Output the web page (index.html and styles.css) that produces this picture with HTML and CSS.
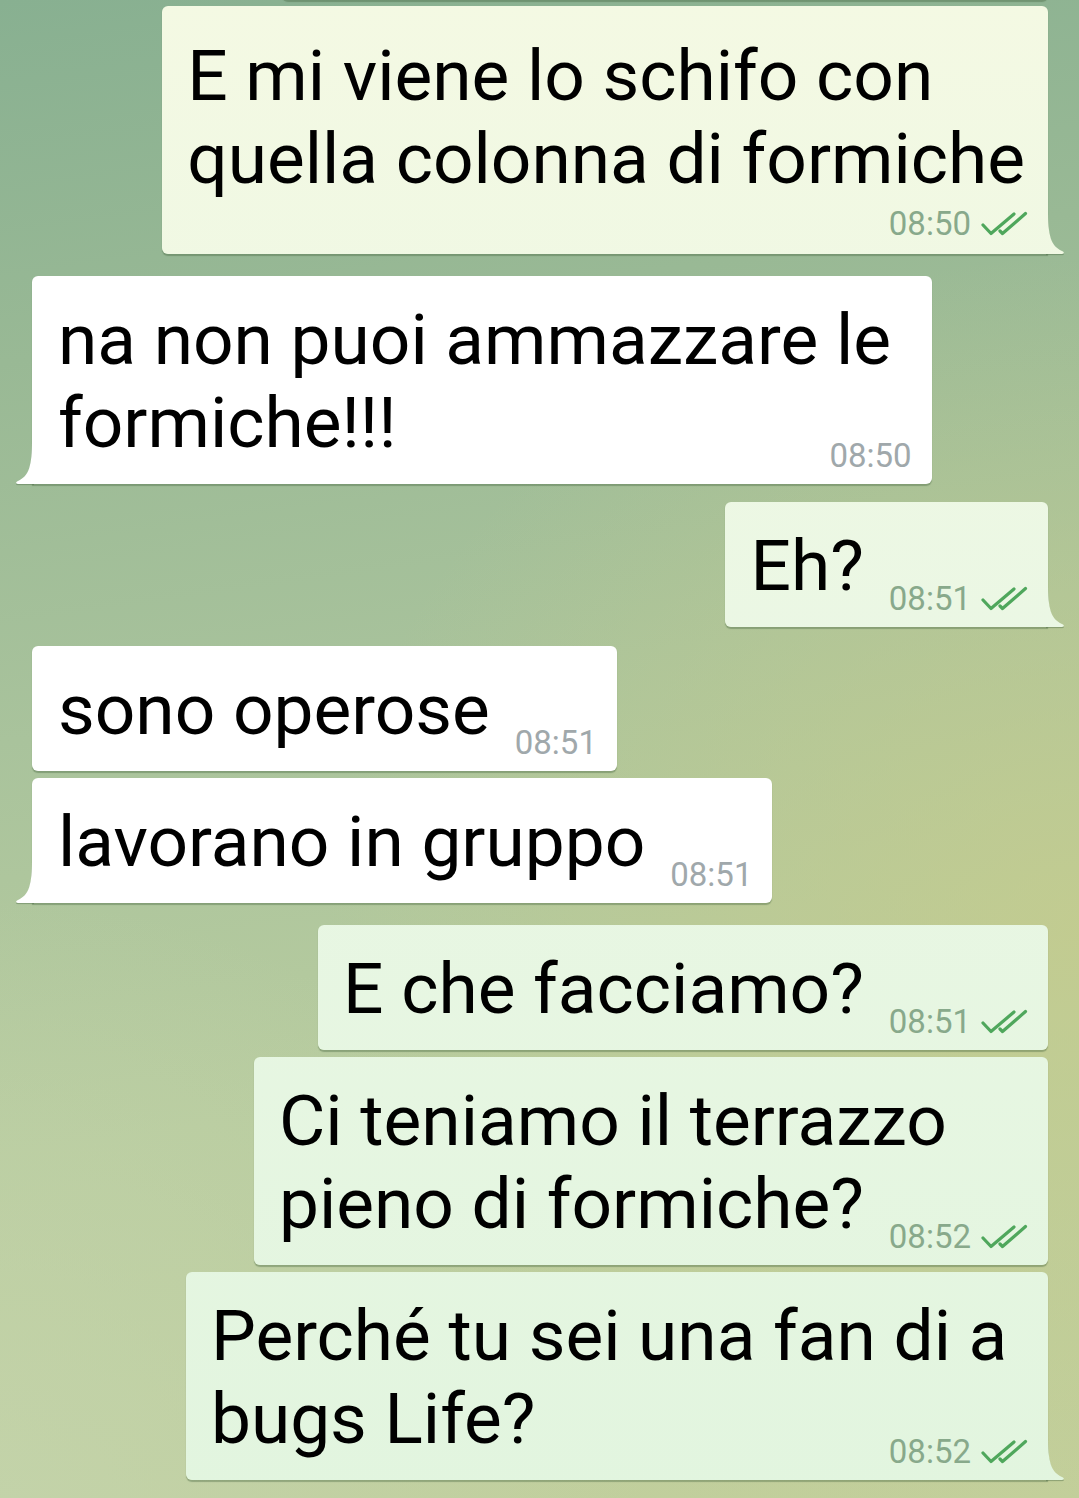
FILE: index.html
```html
<!DOCTYPE html>
<html lang="it">
<head>
    <meta charset="UTF-8">
    <meta name="viewport" content="width=device-width, initial-scale=1.0">
    <title>Chat</title>
    <link rel="stylesheet" href="styles.css">
</head>
<body>
    <div class="chat">
        <!-- bottom of the previous message, cut by the top of the screen -->
        <div class="row row--out row--top">
            <div class="bubble bubble--out bubble--prev"></div>
        </div>

        <div class="row row--out row--first">
            <div class="bubble bubble--out bubble--tail-out bubble--tall">
                <p class="text">E mi viene lo schifo con&nbsp;<br>quella colonna di formiche</p>
                <div class="meta meta--below">
                    <span class="time">08:50</span>
                    <svg class="checks" viewBox="0 0 47 26"><path d="M2 14 L10 22.5 L33 3 M19 20 L21.5 22.5 L44.5 2.5"/></svg>
                </div>
                <div class="tail tail--out"><div class="tail-shadow"></div><div class="tail-fill"></div></div>
            </div>
        </div>

        <div class="row row--in row--gap-l">
            <div class="bubble bubble--in bubble--tail-in">
                <p class="text">na non puoi ammazzare le&nbsp;<br>formiche!!!<span class="meta"><span class="time">08:50</span></span></p>
                <div class="tail tail--in"><div class="tail-shadow"></div><div class="tail-fill"></div></div>
            </div>
        </div>

        <div class="row row--out">
            <div class="bubble bubble--out bubble--tail-out">
                <p class="text">Eh?<span class="meta"><span class="time">08:51</span><svg class="checks" viewBox="0 0 47 26"><path d="M2 14 L10 22.5 L33 3 M19 20 L21.5 22.5 L44.5 2.5"/></svg></span></p>
                <div class="tail tail--out"><div class="tail-shadow"></div><div class="tail-fill"></div></div>
            </div>
        </div>

        <div class="row row--in row--gap-m">
            <div class="bubble bubble--in">
                <p class="text">sono operose<span class="meta"><span class="time">08:51</span></span></p>
            </div>
        </div>

        <div class="row row--in row--cont">
            <div class="bubble bubble--in bubble--tail-in">
                <p class="text">lavorano in gruppo<span class="meta"><span class="time">08:51</span></span></p>
                <div class="tail tail--in"><div class="tail-shadow"></div><div class="tail-fill"></div></div>
            </div>
        </div>

        <div class="row row--out row--gap-l">
            <div class="bubble bubble--out">
                <p class="text">E che facciamo?<span class="meta"><span class="time">08:51</span><svg class="checks" viewBox="0 0 47 26"><path d="M2 14 L10 22.5 L33 3 M19 20 L21.5 22.5 L44.5 2.5"/></svg></span></p>
            </div>
        </div>

        <div class="row row--out row--cont">
            <div class="bubble bubble--out">
                <p class="text">Ci teniamo il terrazzo&nbsp;<br>pieno di formiche?<span class="meta"><span class="time">08:52</span><svg class="checks" viewBox="0 0 47 26"><path d="M2 14 L10 22.5 L33 3 M19 20 L21.5 22.5 L44.5 2.5"/></svg></span></p>
            </div>
        </div>

        <div class="row row--out row--cont">
            <div class="bubble bubble--out bubble--tail-out">
                <p class="text">Perché tu sei una fan di a&nbsp;<br>bugs Life?<span class="meta"><span class="time">08:52</span><svg class="checks" viewBox="0 0 47 26"><path d="M2 14 L10 22.5 L33 3 M19 20 L21.5 22.5 L44.5 2.5"/></svg></span></p>
                <div class="tail tail--out"><div class="tail-shadow"></div><div class="tail-fill"></div></div>
            </div>
        </div>
    </div>
</body>
</html>
```

FILE: styles.css
```css
* {
    margin: 0;
    padding: 0;
    box-sizing: border-box;
}

:root {
    --out-bg: linear-gradient(180deg, #f4f9e3 0%, #eaf7e4 45%, #e2f5df 100%) fixed;
    --in-bg: #ffffff;
    --shadow: rgba(66, 98, 60, 0.38);
    --time-in: #a0a8ab;
    --time-out: #88a98b;
    --check: #4fa75c;
}

body {
    width: 1079px;
    height: 1498px;
    overflow: hidden;
    font-family: Roboto, "Noto Sans", "Liberation Sans", sans-serif;
    color: #000;
    background:
        radial-gradient(ellipse 70% 45% at 100% 62%, rgba(198, 204, 140, 0.75), rgba(198, 204, 140, 0) 100%),
        radial-gradient(ellipse 60% 40% at 0% 100%, rgba(196, 212, 172, 0.8), rgba(196, 212, 172, 0) 100%),
        linear-gradient(172deg, #88b091 0%, #99b995 22%, #a9c39c 45%, #b8cc9f 70%, #c2cf9c 100%);
}

.chat {
    display: flex;
    flex-direction: column;
    padding: 0 31px 0 32px;
}

/* message rows */
.row {
    display: flex;
    margin-top: 18px;
}

.row--out {
    justify-content: flex-end;
}

.row--in {
    justify-content: flex-start;
}

.row--cont {
    margin-top: 7px;
}

.row--gap-m {
    margin-top: 19px;
}

.row--gap-l {
    margin-top: 22px;
}

.row--top {
    margin-top: -20px;
}

.row--first {
    margin-top: 6px;
}

/* bubbles */
.bubble {
    position: relative;
    border-radius: 6px;
    padding: 22px 23px 10px 26px;
    box-shadow: 0 1.5px 1px var(--shadow);
}

.bubble--in {
    background: var(--in-bg);
}

.bubble--out {
    background: var(--out-bg);
    padding-left: 25px;
}

.bubble--prev {
    width: 766px;
    height: 20px;
    padding: 0;
}

.bubble--tall {
    padding-top: 28px;
    padding-bottom: 12px;
}

.bubble--tail-out {
    border-bottom-right-radius: 0;
}

.bubble--tail-in {
    border-bottom-left-radius: 0;
}

.text {
    font-size: 71.2px;
    line-height: 83px;
    white-space: nowrap;
}

/* time + ticks, sits in the bottom right corner */
.meta {
    float: right;
    display: flex;
    align-items: center;
    margin: 57px -3px 0 25px;
    line-height: 36px;
}

.meta--below {
    float: none;
    justify-content: flex-end;
    margin: 6px -3px 0 0;
}

.time {
    font-size: 33px;
    color: var(--time-in);
}

.bubble--out .time {
    color: var(--time-out);
}

.checks {
    width: 47px;
    height: 26px;
    margin-left: 10px;
    fill: none;
    stroke: var(--check);
    stroke-width: 3.2;
    stroke-linecap: round;
    stroke-linejoin: round;
}

/* bubble tail */
.tail {
    position: absolute;
    bottom: 0;
    width: 18px;
    height: 44px;
}

.tail--out {
    right: -16px;
}

.tail--in {
    left: -16px;
}

.tail-fill,
.tail-shadow {
    position: absolute;
    top: 0;
    left: 0;
    width: 100%;
    height: 100%;
}

.tail--out .tail-fill,
.tail--out .tail-shadow {
    clip-path: path('M0 0 L2 0 C2 26 5 36 16 41 C19 42.5 18 44 15 44 L0 44 Z');
}

.tail--in .tail-fill,
.tail--in .tail-shadow {
    clip-path: path('M18 0 L16 0 C16 26 13 36 2 41 C-1 42.5 0 44 3 44 L18 44 Z');
}

.tail-shadow {
    background: var(--shadow);
    transform: translateY(1.5px);
}

.tail--out .tail-fill {
    background: var(--out-bg);
}

.tail--in .tail-fill {
    background: var(--in-bg);
}
```
